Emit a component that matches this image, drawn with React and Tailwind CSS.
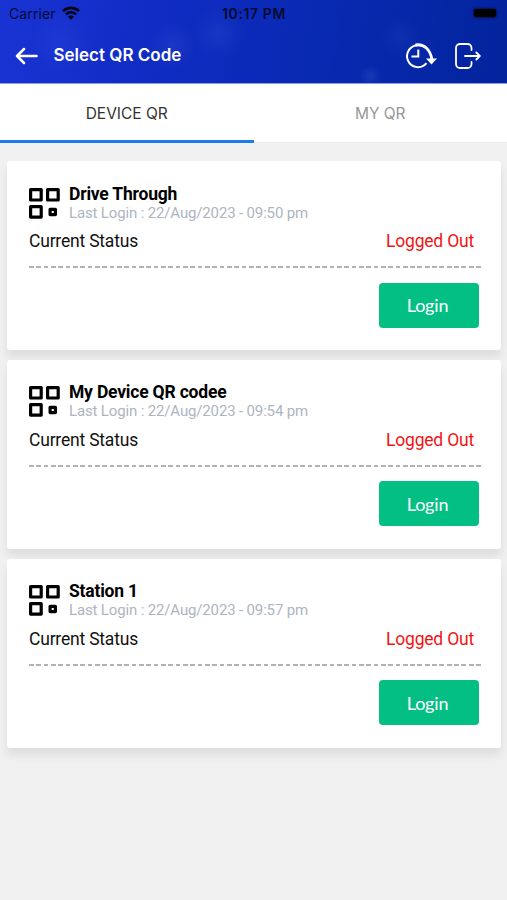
const devices = [
  { name: "Drive Through", lastLogin: "22/Aug/2023 - 09:50 pm" },
  { name: "My Device QR codee", lastLogin: "22/Aug/2023 - 09:54 pm" },
  { name: "Station 1", lastLogin: "22/Aug/2023 - 09:57 pm" },
];

function StatusBar() {
  return (
    <div className="grid h-7 grid-cols-3 items-center pl-[9px] pr-[11px] text-[#050a30]">
      <div className="flex items-center gap-[6px]">
        <span className="-mt-px text-[14px] tracking-[0.1px]">Carrier</span>
        <svg className="-mt-[3px]" width="18" height="14" viewBox="0 0 18 14" fill="none" stroke="#000515" strokeWidth="2.6">
          <path d="M1 5.2C5.4.8 12.6.8 17 5.2" />
          <path d="M3.9 8.4c2.8-2.8 7.4-2.8 10.2 0" />
          <path d="M9 13.8 5.9 10.7c1.7-1.7 4.5-1.7 6.2 0Z" fill="#000515" stroke="none" />
        </svg>
      </div>
      <span className="-mt-px ml-[3px] text-center text-[14px] font-semibold tracking-[0.6px] whitespace-nowrap">10:17 PM</span>
      <span className="-mt-[2px] h-[8px] w-[22px] justify-self-end rounded-[2px] bg-black shadow-[0_0_2px_1px_#00000080]" />
    </div>
  );
}

function Header() {
  return (
    <header className="h-[84px] border-b border-[#8d9fe0] bg-[radial-gradient(circle_at_43%_40%,#2345cc70_0,transparent_9%),radial-gradient(circle_at_12%_50%,#2b48dc50_0,transparent_7%),radial-gradient(circle_at_34%_55%,#2845cc70_0,transparent_7%),radial-gradient(circle_at_79%_45%,#1c3cb860_0,transparent_5%),radial-gradient(circle_at_73%_92%,#2b48c080_0,transparent_3%),linear-gradient(100deg,#1a33d4_0%,#102cc4_30%,#0829b0_65%,#03249c_100%)]">
      <StatusBar />
      <div className="flex h-[55px] items-center pl-[15px] pr-[26px] text-white">
        <svg width="23" height="18" viewBox="0 0 23 18" fill="none" stroke="currentColor" strokeWidth="2.5" strokeLinecap="round" strokeLinejoin="round">
          <path d="M9 2 2 9l7 7M2 9h19.5" />
        </svg>
        <h1 className="ml-[15.5px] text-[17px] font-semibold">Select QR Code</h1>
        <svg className="ml-auto" width="32" height="26" viewBox="0 0 32 26" fill="none" stroke="currentColor" strokeWidth="2">
          <path d="M21.5 20.2A11 11 0 1 1 14 2.2" />
          <path d="M10.5 2C19 .5 25.5 6.500 27 17" strokeWidth="2.8" />
          <path d="M13.300 6.500V13.500H6.500" />
          <path d="m21 15.500 5.500 6 5.500-6Z" fill="currentColor" stroke="none" />
        </svg>
        <svg className="ml-[17px]" width="27" height="26" viewBox="0 0 27 26" fill="none" stroke="currentColor" strokeWidth="1.800" strokeLinecap="round" strokeLinejoin="round">
          <path d="M17.500 7V5a4 4 0 0 0-4-4H6a4 4 0 0 0-4 4v16a4 4 0 0 0 4 4h7.500a4 4 0 0 0 4-4v-2" />
          <path d="M11 13h14.500M22.300 9.500l3.500 3.500-3.500 3.500" />
        </svg>
      </div>
    </header>
  );
}

function Tabs() {
  return (
    <nav className="grid h-[59px] grid-cols-2 border-b border-[#ececec] bg-white text-[15.5px]">
      <button className="-mb-px border-b-[3px] border-[#1c7ce8] pt-[3px] text-[#333]">DEVICE QR</button>
      <button className="pt-[2px] text-[#969696]">MY QR</button>
    </nav>
  );
}

function QrIcon() {
  return (
    <svg className="shrink-0" width="31" height="31" viewBox="0 0 31 31" fill="none" stroke="#000" strokeWidth="3.2" strokeLinejoin="round">
      <rect x="1.6" y="1.6" width="10.6" height="10.4" />
      <rect x="18.6" y="1.6" width="10.6" height="10.4" />
      <rect x="1.6" y="18.7" width="10.6" height="10.4" />
      <rect x="21.1" y="21.3" width="5.3" height="5.3" />
    </svg>
  );
}

function DeviceCard({ device }) {
  return (
    <article className="h-[189px] rounded-[3px] bg-white pl-[22px] pr-[20px] pt-[22px] font-[Roboto,sans-serif] shadow-[0_7px_9px_rgba(0,0,0,0.08)]">
      <div className="flex h-[40px] gap-[9px]">
        <div className="pt-[4.5px]">
          <QrIcon />
        </div>
        <div>
          <h2 className="pt-[0.5px] text-[17.5px] leading-[20px] font-bold tracking-[-0.2px] text-black">{device.name}</h2>
          <p className="text-[15px] leading-[18px] tracking-[-0.15px] text-[#adb5c2]">Last Login : {device.lastLogin}</p>
        </div>
      </div>
      <div className="flex h-[36px] justify-between pr-[7px] text-[17.5px] leading-[37px] tracking-[-0.2px]">
        <span className="text-[#111]">Current Status</span>
        <span className="text-[#f01414]">Logged Out</span>
      </div>
      <div className="mt-[7px] h-[2px] bg-[repeating-linear-gradient(90deg,#b2b2b2_0,#b2b2b2_4.8px,transparent_4.8px,transparent_7.33px)]" />
      <div className="flex justify-end pr-[2px] pt-[14.5px]">
        <button className="h-[45px] w-[100px] rounded-[4px] bg-[#04bf83] pt-px pr-[3px] font-[Lato,sans-serif] text-[18px] tracking-[-0.2px] text-white">Login</button>
      </div>
    </article>
  );
}

export default function App() {
  return (
    <div className="min-h-[900px] w-[507px] bg-[#f0f0f0] font-[Inter,sans-serif]">
      <Header />
      <Tabs />
      <main className="flex flex-col gap-[9.8px] pl-[7px] pr-[6px] pt-[18px]">
        {devices.map((device) => (
          <DeviceCard key={device.name} device={device} />
        ))}
      </main>
    </div>
  );
}
